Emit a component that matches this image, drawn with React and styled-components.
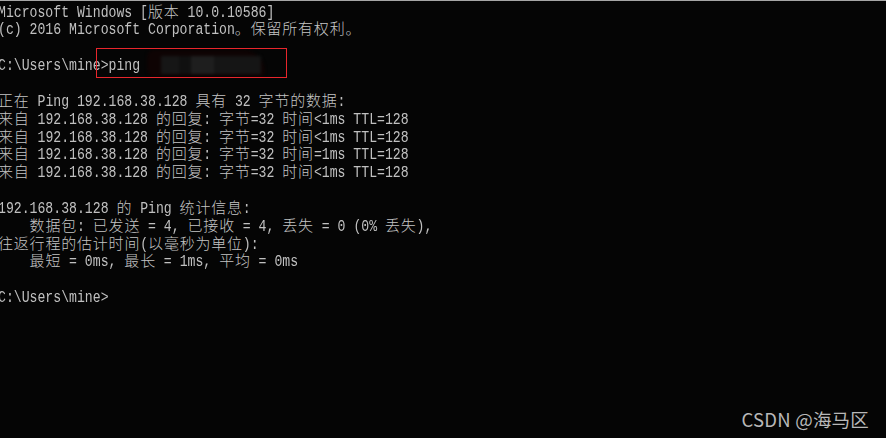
import React from 'react';
import styled, { createGlobalStyle } from 'styled-components';

const CELL = 7.9;
const LINE = 17.85;

const GlobalStyle = createGlobalStyle`
  html, body {
    margin: 0;
    padding: 0;
    background: #050505;
  }
`;

const Console = styled.div`
  position: relative;
  box-sizing: border-box;
  width: 886px;
  height: 438px;
  overflow: hidden;
  background: #050505;
  border-top: 1px solid #a6a6a6;
  color: #c0c0c0;
`;

const Screen = styled.div`
  padding: 1.6px 0 0 0;
  margin-left: -2px;
`;

const Line = styled.div`
  height: ${LINE}px;
  line-height: ${LINE}px;
  white-space: pre;
`;

const Narrow = styled.span`
  display: inline-block;
  font-family: "Liberation Mono", monospace;
  font-size: ${CELL / 0.6}px;
  line-height: 13px;
  white-space: pre;
  transform: scaleY(1.22);
  transform-origin: 50% 10px;
`;

const Wide = styled.span`
  display: inline-block;
  width: ${(p) => p.cells * CELL}px;
  font-family: "Noto Sans CJK SC", sans-serif;
  font-size: 15px;
  font-weight: 300;
  line-height: 15px;
  white-space: pre;
  color: #c4c4c4;
`;

const Highlight = styled.div`
  position: absolute;
  left: 96px;
  top: 47px;
  width: 189px;
  height: 28px;
  border: 1.5px solid #e8262c;
`;

const Smudge = styled.div`
  position: absolute;
  left: 147px;
  top: 49px;
  width: 118px;
  height: 27px;
  border-radius: 14px 40px 10px 16px;
  background: #0e0303;
  filter: blur(1.5px);
  display: flex;
  align-items: center;
  padding: 4px 4px 2px 14px;
  box-sizing: border-box;
`;

const Patch = styled.div`
  height: 18px;
  flex: ${(p) => p.grow};
  background: ${(p) => p.shade};
`;

const Watermark = styled.div`
  position: absolute;
  right: 17px;
  bottom: 6px;
  font-family: "Noto Sans CJK SC", sans-serif;
  font-size: 18.5px;
  color: #b8b8b8;
  letter-spacing: 0.2px;
`;

const lines = [
  'Microsoft Windows [版本 10.0.10586]',
  '(c) 2016 Microsoft Corporation。保留所有权利。',
  '',
  'C:\\Users\\mine>ping ',
  '',
  '正在 Ping 192.168.38.128 具有 32 字节的数据:',
  '来自 192.168.38.128 的回复: 字节=32 时间<1ms TTL=128',
  '来自 192.168.38.128 的回复: 字节=32 时间<1ms TTL=128',
  '来自 192.168.38.128 的回复: 字节=32 时间=1ms TTL=128',
  '来自 192.168.38.128 的回复: 字节=32 时间<1ms TTL=128',
  '',
  '192.168.38.128 的 Ping 统计信息:',
  '    数据包: 已发送 = 4, 已接收 = 4, 丢失 = 0 (0% 丢失),',
  '往返行程的估计时间(以毫秒为单位):',
  '    最短 = 0ms, 最长 = 1ms, 平均 = 0ms',
  '',
  'C:\\Users\\mine>',
];

// split a line into runs of half-width and full-width characters
function splitRuns(text) {
  const out = [];
  let cur = '';
  let wide = null;
  for (const ch of text) {
    const w = ch.charCodeAt(0) >= 0x2e80;
    if (wide !== null && w !== wide) {
      out.push({ wide, text: cur });
      cur = '';
    }
    wide = w;
    cur += ch;
  }
  if (cur) out.push({ wide, text: cur });
  return out;
}

function TermLine({ text }) {
  const parts = [];
  splitRuns(text).forEach((r, i) => {
    if (r.wide) {
      [...r.text].forEach((ch, j) => {
        parts.push(<Wide key={`${i}-${j}`} cells={2}>{ch}</Wide>);
      });
    } else {
      parts.push(<Narrow key={i}>{r.text}</Narrow>);
    }
  });
  return <Line>{parts}</Line>;
}

export default function App() {
  return (
    <Console>
      <GlobalStyle />
      <Screen>
        {lines.map((l, i) => (
          <TermLine key={i} text={l} />
        ))}
      </Screen>
      <Smudge>
        <Patch grow={1.7} shade="#161616" />
        <Patch grow={1.2} shade="#101010" />
        <Patch grow={2.2} shade="#1e1e1e" />
        <Patch grow={4.5} shade="#151515" />
      </Smudge>
      <Highlight />
      <Watermark>CSDN @海马区</Watermark>
    </Console>
  );
}
